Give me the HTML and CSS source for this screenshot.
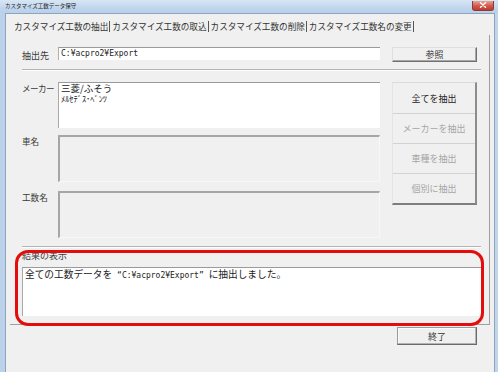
FILE: index.html
```html
<!DOCTYPE html>
<html lang="ja">
<head>
<meta charset="utf-8">
<title>カスタマイズ工数データ保守</title>
<link rel="stylesheet" href="styles.css">
</head>
<body>
<div class="window">
  <div class="titlebar">
    <span class="title">カスタマイズ工数データ保守</span>
    <span class="close"><svg width="8" height="6" viewBox="0 0 8 6"><path d="M1.5 0.8 L6.5 5.2 M6.5 0.8 L1.5 5.2" stroke="#fff" stroke-width="1.4" stroke-linecap="round"/></svg></span>
  </div>
  <div class="client">
    <div class="tabs">
      <span class="tab">カスタマイズ工数の抽出</span><span class="tab">カスタマイズ工数の取込</span><span class="tab">カスタマイズ工数の削除</span><span class="tab">カスタマイズ工数名の変更</span>
    </div>
    <div class="panel">
      <div class="row-dest">
        <span class="label">抽出先</span>
        <div class="input mono">C:¥acpro2¥Export</div>
        <div class="btn btn-ref">参照</div>
      </div>
      <div class="sep sep1"></div>
      <div class="middle">
        <div class="fields">
          <div class="field">
            <span class="label narrow">メーカー</span>
            <div class="box list"><div class="item">三菱/ふそう</div><div class="item small">ﾒﾙｾﾃﾞｽ･ﾍﾞﾝﾂ</div></div>
          </div>
          <div class="field f2">
            <span class="label">車名</span>
            <div class="box disabled"></div>
          </div>
          <div class="field f3">
            <span class="label">工数名</span>
            <div class="box disabled"></div>
          </div>
        </div>
        <div class="stack">
          <div class="sbtn s1">全てを抽出</div>
          <div class="sbtn dis">メーカーを抽出</div>
          <div class="sbtn dis">車種を抽出</div>
          <div class="sbtn dis s4">個別に抽出</div>
        </div>
      </div>
      <div class="sep sep2"></div>
      <div class="label result-label">結果の表示</div>
      <div class="result">全ての工数データを<span class="q ql">“</span><span class="mono">C:¥acpro2¥Export</span><span class="q qr">”</span>に抽出しました。</div>
    </div>
    <div class="footer">
      <div class="btn btn-end">終了</div>
    </div>
  </div>
</div>
<div class="highlight"></div>
</body>
</html>
```
FILE: styles.css
```css
* { box-sizing: border-box; }
html, body { margin: 0; padding: 0; }
body {
  width: 498px;
  height: 372px;
  overflow: hidden;
  position: relative;
  background: linear-gradient(to right, #bcd2ea, #c9dcf0 40%, #c0d5ec);
  font-family: "Noto Sans CJK JP", sans-serif;
  color: #333;
}
.window {
  display: flex;
  flex-direction: column;
  height: 372px;
}
.titlebar {
  height: 13px;
  display: flex;
  align-items: center;
  padding-left: 5px;
  background: linear-gradient(to bottom, #d8e6f5, #c1d6ed 60%, #b9d0ea);
}
.title {
  font-size: 5.5px;
  line-height: 8px;
  color: #1e1e1e;
  white-space: nowrap;
  margin-top: -1px;
}
.close {
  margin-left: auto;
  margin-right: 4px;
  width: 22px;
  height: 10px;
  margin-top: -2px;
  border-radius: 0 0 3px 3px;
  background: linear-gradient(to bottom, #e6a595, #d0574a 55%, #c33a2e);
  border: 1px solid #8c3a34;
  border-top: none;
  display: flex;
  align-items: center;
  justify-content: center;
}
.close svg { display: block; }
.client {
  flex: 1;
  margin: 0 3px 0 5px;
  border: 1px solid #8fa5bd;
  border-bottom: none;
  background: #f0f0f0;
  display: flex;
  flex-direction: column;
}
.tabs {
  height: 21px;
  padding: 3px 0 0 8px;
  display: flex;
  align-items: center;
  white-space: nowrap;
}
.tab {
  font-size: 8.6px;
  line-height: 11px;
  color: #333;
  padding: 0 1px 0 2px;
  border-right: 1px solid #555;
}
.tab:first-child { padding-left: 0; }
.panel {
  margin: 0 4px 0 4px;
  border-right: 1px solid #a0a0a0;
  border-bottom: 1px solid #a0a0a0;
  padding: 12px 8px 8px 12px;
  display: flex;
  flex-direction: column;
}
.label {
  font-size: 9px;
  line-height: 12px;
  color: #3a3a3a;
  white-space: nowrap;
}
.row-dest {
  display: flex;
  align-items: flex-start;
  height: 15px;
}
.row-dest .label {
  width: 36px;
  line-height: 15px;
  margin-top: 1px;
}
.mono {
  font-family: "DejaVu Sans Mono", "Liberation Mono", monospace;
  font-size: 8px;
}
.input {
  width: 322px;
  height: 13px;
  background: #fff;
  border-top: 1px solid #9a9a9a;
  border-left: 1px solid #b0b0b0;
  padding-left: 2px;
  line-height: 12px;
  color: #222;
}
.btn {
  background: #f0f0f0;
  border: 1px solid;
  border-color: #dedede #707070 #707070 #dedede;
  box-shadow: inset -1px -1px 0 #a8a8a8;
  font-size: 9px;
  color: #333;
  display: flex;
  align-items: center;
  justify-content: center;
}
.btn-ref {
  margin-left: 12px;
  width: 85px;
  height: 15px;
}
.sep {
  height: 2px;
  border-top: 1px solid #b4b4b4;
  border-bottom: 1px solid #fdfdfd;
}
.sep1 { margin-top: 7px; }
.middle {
  margin-top: 11px;
  display: flex;
  align-items: flex-start;
}
.fields {
  width: 358px;
  display: flex;
  flex-direction: column;
}
.field {
  display: flex;
  align-items: flex-start;
}
.field .label { width: 36px; font-size: 8.6px; }
.field .label.narrow { letter-spacing: -0.6px; }
.f2 { margin-top: 7px; }
.f3 { margin-top: 9px; }
.box {
  width: 322px;
  height: 47px;
}
.list {
  height: 46px;
  background: #fff;
  border-top: 1px solid #9a9a9a;
  border-left: 1px solid #a8a8a8;
  padding: 0 0 0 2px;
  color: #222;
}
.item {
  font-size: 9.5px;
  line-height: 11px;
}
.item.small {
  font-size: 8.4px;
  line-height: 9px;
}
.disabled {
  background: #f0f0f0;
  border-top: 2px solid #a6a6a6;
  border-left: 2px solid #a6a6a6;
  border-right: 1px solid #f7f7f7;
  border-bottom: 1px solid #f7f7f7;
}
.stack {
  margin-left: 12px;
  width: 85px;
  display: flex;
  flex-direction: column;
  border-top: 1px solid #dadada;
  border-left: 1px solid #e4e4e4;
  border-right: 2px solid #8c8c8c;
  border-bottom: 2px solid #7e7e7e;
}
.sbtn {
  height: 30px;
  font-size: 9px;
  color: #222;
  display: flex;
  align-items: center;
  justify-content: center;
  border-bottom: 1px solid #d2d2d2;
  background: #f0f0f0;
}
.sbtn.s1 { height: 31px; }
.sbtn.s4 { border-bottom: none; height: 29px; }
.sbtn.dis { color: #a6a6a6; }
.sep2 { margin-top: 8px; }
.result-label {
  margin-top: 2px;
  font-size: 9px;
}
.result {
  margin-top: 5px;
  height: 49px;
  background: #fff;
  border-top: 1px solid #9a9a9a;
  border-left: 1px solid #a8a8a8;
  padding: 1px 0 0 2px;
  font-size: 9.7px;
  line-height: 11px;
  color: #222;
  white-space: nowrap;
}
.q {
  display: inline-block;
  width: 9.7px;
  font-family: "DejaVu Sans Mono", monospace;
  font-size: 8px;
}
.ql { text-align: right; }
.qr { text-align: left; }
.footer {
  display: flex;
  justify-content: flex-end;
  padding: 2px 17px 0 0;
}
.btn-end {
  width: 80px;
  height: 18px;
  border-color: #9a9a9a #6a6a6a #6a6a6a #9a9a9a;
  box-shadow: inset -1px -1px 0 #b4b4b4, inset 1px 1px 0 #fbfbfb;
}
.highlight {
  position: absolute;
  left: 15px;
  top: 250px;
  width: 469px;
  height: 76px;
  border: 3px solid #e30d0d;
  border-radius: 13px;
  pointer-events: none;
}
```
